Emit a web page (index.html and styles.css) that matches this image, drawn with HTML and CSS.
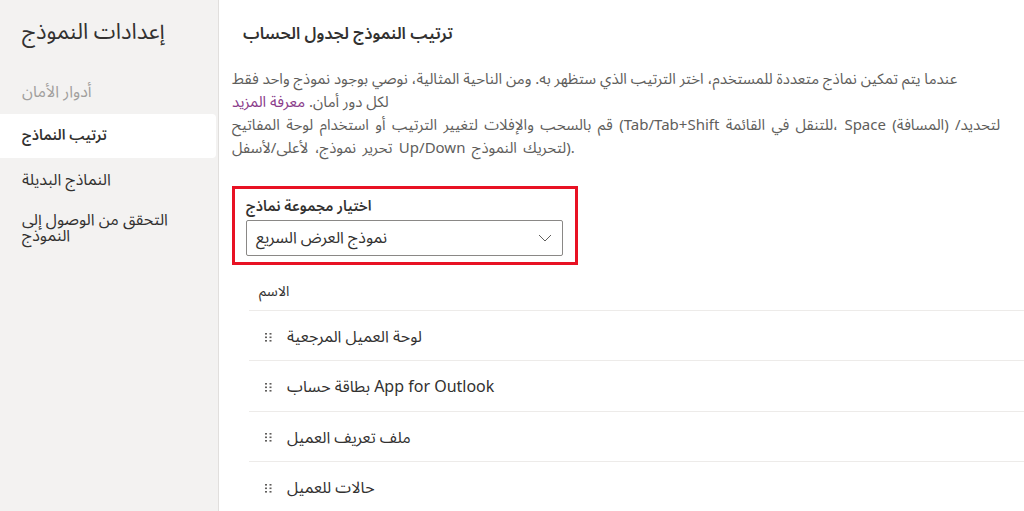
FILE: index.html
```html
<!DOCTYPE html>
<html lang="ar">
<head>
<meta charset="utf-8">
<link rel="stylesheet" href="styles.css">
</head>
<body>
<div class="page">
  <aside class="sidebar">
    <h1 class="side-title">إعدادات النموذج</h1>
    <nav class="nav">
      <div class="nav-item disabled">أدوار الأمان</div>
      <div class="nav-item active">ترتيب النماذج</div>
      <div class="nav-item">النماذج البديلة</div>
      <div class="nav-item multi">التحقق من الوصول إلى النموذج</div>
    </nav>
  </aside>
  <main class="main">
    <h2 class="main-title">ترتيب النموذج لجدول الحساب</h2>
    <p class="desc">عندما يتم تمكين نماذج متعددة للمستخدم، اختر الترتيب الذي ستظهر به. ومن الناحية المثالية، نوصي بوجود نموذج واحد فقط<br>لكل دور أمان. <a class="link" href="#">معرفة المزيد</a><br><span class="wide">قم بالسحب والإفلات لتغيير الترتيب أو استخدام لوحة المفاتيح (Tab/Tab+Shift للتنقل في القائمة، Space (المسافة) لتحديد/&rlm;<br>تحرير نموذج، لأعلى/لأسفل Up/Down لتحريك النموذج).</span></p>
    <div class="picker">
      <div class="picker-label">اختيار مجموعة نماذج</div>
      <div class="select">
        <span class="select-text">نموذج العرض السريع</span>
        <svg class="chev" width="14" height="8" viewBox="0 0 14 8"><path d="M1 1 L7 7 L13 1" fill="none" stroke="#605e5c" stroke-width="1"/></svg>
      </div>
    </div>
    <div class="list">
      <div class="list-head">الاسم</div>
      <div class="row"><svg class="grip" width="8" height="9" viewBox="0 0 8 9"><g fill="#605e5c"><rect x="0" y="0" width="2" height="1.6"/><rect x="4.5" y="0" width="2" height="1.6"/><rect x="0" y="3.5" width="2" height="1.6"/><rect x="4.5" y="3.5" width="2" height="1.6"/><rect x="0" y="7" width="2" height="1.6"/><rect x="4.5" y="7" width="2" height="1.6"/></g></svg><span class="row-text">لوحة العميل المرجعية</span></div>
      <div class="row"><svg class="grip" width="8" height="9" viewBox="0 0 8 9"><g fill="#605e5c"><rect x="0" y="0" width="2" height="1.6"/><rect x="4.5" y="0" width="2" height="1.6"/><rect x="0" y="3.5" width="2" height="1.6"/><rect x="4.5" y="3.5" width="2" height="1.6"/><rect x="0" y="7" width="2" height="1.6"/><rect x="4.5" y="7" width="2" height="1.6"/></g></svg><span class="row-text">App for Outlook بطاقة حساب</span></div>
      <div class="row"><svg class="grip" width="8" height="9" viewBox="0 0 8 9"><g fill="#605e5c"><rect x="0" y="0" width="2" height="1.6"/><rect x="4.5" y="0" width="2" height="1.6"/><rect x="0" y="3.5" width="2" height="1.6"/><rect x="4.5" y="3.5" width="2" height="1.6"/><rect x="0" y="7" width="2" height="1.6"/><rect x="4.5" y="7" width="2" height="1.6"/></g></svg><span class="row-text">ملف تعريف العميل</span></div>
      <div class="row"><svg class="grip" width="8" height="9" viewBox="0 0 8 9"><g fill="#605e5c"><rect x="0" y="0" width="2" height="1.6"/><rect x="4.5" y="0" width="2" height="1.6"/><rect x="0" y="3.5" width="2" height="1.6"/><rect x="4.5" y="3.5" width="2" height="1.6"/><rect x="0" y="7" width="2" height="1.6"/><rect x="4.5" y="7" width="2" height="1.6"/></g></svg><span class="row-text">حالات للعميل</span></div>
    </div>
  </main>
</div>
</body>
</html>
```
FILE: styles.css
```css
* { box-sizing: border-box; }
html, body { margin: 0; padding: 0; height: 100%; overflow: hidden; }
body {
  font-family: "Segoe UI", "Noto Sans Arabic", "DejaVu Sans", sans-serif;
  color: #323130;
  background: #fff;
}
.page { display: flex; height: 511px; }
.sidebar {
  width: 219px;
  flex: none;
  background: #f3f2f1;
  border-right: 1px solid #e1dfdd;
  padding-top: 14px;
}
.side-title {
  margin: 0 0 0 22px;
  font-size: 22px;
  font-weight: 400;
  line-height: 36px;
  color: #323130;
}
.nav { margin-top: 20px; padding-right: 2px; }
.nav-item {
  font-size: 16px;
  line-height: 20px;
  padding: 12px 0 12px 22px;
  color: #323130;
  border-radius: 0 4px 4px 0;
}
.nav-item.disabled { color: #a19f9d; }
.nav-item.active { background: #fff; font-weight: 600; font-size: 14.5px; }
.nav-item.multi { line-height: 16px; padding-top: 10px; padding-right: 40px; }
.main { flex: 1; padding: 20px 0 0 13px; min-width: 0; }
.main-title {
  margin: 0 0 0 11px;
  font-size: 16.5px;
  font-weight: 600;
  line-height: 28px;
  color: #323130;
}
.desc {
  margin: 20px 0 0 0;
  font-size: 15px;
  line-height: 23px;
  color: #605e5c;
  padding-right: 2px;
}
.wide { word-spacing: 2.5px; }
.link { color: #8a3c8a; text-decoration: none; }
.picker {
  margin-top: 26px;
  width: 346px;
  border: 3px solid #e81123;
  padding: 8px 12px 6px 11px;
}
.picker-label { font-size: 14.5px; font-weight: 600; line-height: 20px; color: #323130; }
.select {
  margin-top: 3px;
  height: 36px;
  border: 1px solid #8a8886;
  border-radius: 2px;
  display: flex;
  align-items: center;
  justify-content: space-between;
  padding: 0 10px 0 9px;
}
.select-text { font-size: 16px; color: #323130; }
.list { margin: 13px 0 0 17px; }
.list-head {
  font-size: 14px;
  color: #323130;
  height: 33px;
  line-height: 20px;
  padding: 4px 0 0 10px;
  border-bottom: 1px solid #edebe9;
}
.row {
  height: 50.3px;
  display: flex;
  align-items: center;
  gap: 14px;
  padding: 3px 0 0 16px;
  border-bottom: 1px solid #edebe9;
  font-size: 16px;
  color: #323130;
}
.row-text { direction: rtl; }
.grip { flex: none; }
```
